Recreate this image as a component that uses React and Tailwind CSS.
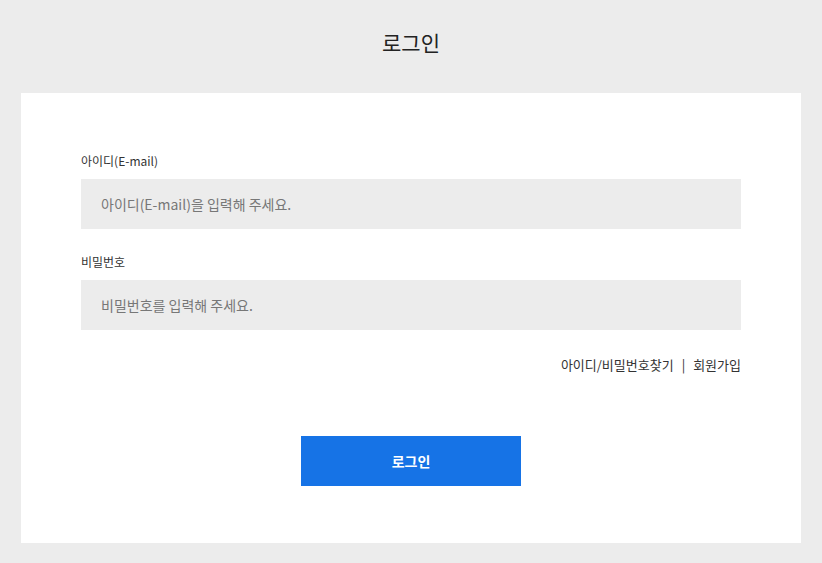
export default function App() {
  const font = { fontFamily: '"Noto Sans CJK KR", "Noto Sans", sans-serif' };
  return (
    <div
      className="min-h-[563px] w-full bg-[#ececec] px-[21px] pb-[20px] font-['Noto_Sans_CJK_KR',sans-serif]"
      style={font}
    >
      <h1 className="flex h-[93px] items-center justify-center pb-[8px] text-[21px] font-normal text-[#222]">
        로그인
      </h1>

      <div className="bg-white px-[60px] pt-[59px] pb-[57px]">
        <label className="block text-[12px] leading-[18px] text-[#333]">아이디(E-mail)</label>
        <input
          type="text"
          placeholder="아이디(E-mail)을 입력해 주세요."
          className="mt-[9px] block h-[50px] w-full bg-[#ececec] px-[20px] text-[14px] text-[#333] outline-none placeholder:text-[#777]"
        />

        <label className="mt-[24px] block text-[12px] leading-[18px] text-[#333]">비밀번호</label>
        <input
          type="password"
          placeholder="비밀번호를 입력해 주세요."
          className="mt-[9px] block h-[50px] w-full bg-[#ececec] px-[20px] text-[14px] text-[#333] outline-none placeholder:text-[#777]"
        />

        <div className="mt-[26px] flex justify-end text-[13px] leading-[18px] text-[#333]">
          <a>아이디/비밀번호찾기</a>
          <span className="mx-[8px]">|</span>
          <a>회원가입</a>
        </div>

        <div className="mt-[62px] flex justify-center">
          <button className="h-[50px] w-[220px] bg-[#1673e6] text-[14px] font-bold text-white">
            로그인
          </button>
        </div>
      </div>
    </div>
  );
}
